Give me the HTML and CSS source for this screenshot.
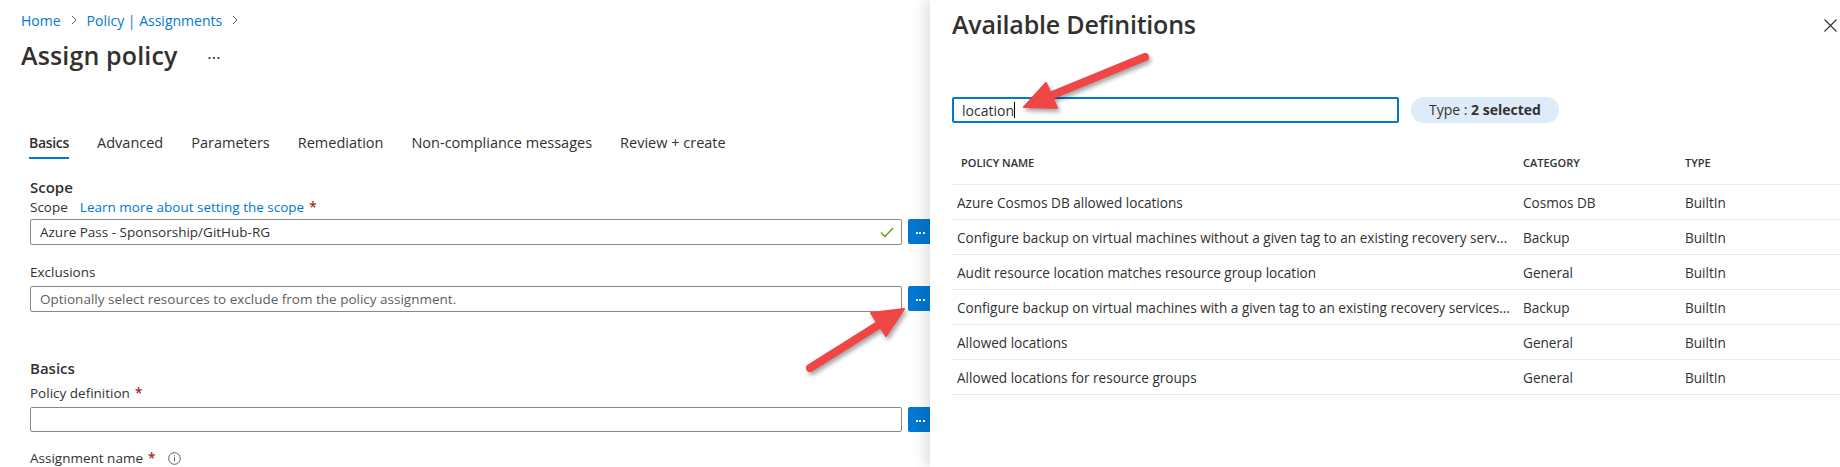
FILE: index.html
```html
<!DOCTYPE html>
<html lang="en">
<head>
<meta charset="utf-8">
<title>Assign policy</title>
<link rel="stylesheet" href="styles.css">
</head>
<body>
<div class="page">
  <main class="blade">
    <nav class="crumbs">
      <a class="crumb">Home</a>
      <svg class="chev" width="6" height="10" viewBox="0 0 6 10"><path d="M1 1l4 4-4 4" fill="none" stroke="#605e5c" stroke-width="1"/></svg>
      <a class="crumb">Policy | Assignments</a>
      <svg class="chev" width="6" height="10" viewBox="0 0 6 10"><path d="M1 1l4 4-4 4" fill="none" stroke="#605e5c" stroke-width="1"/></svg>
    </nav>
    <div class="title-row">
      <h1 class="title">Assign policy</h1>
      <svg class="more" width="12" height="4" viewBox="0 0 12 4"><circle cx="1.5" cy="2" r="1.1" fill="#323130"/><circle cx="6" cy="2" r="1.1" fill="#323130"/><circle cx="10.5" cy="2" r="1.1" fill="#323130"/></svg>
    </div>
    <div class="tabs">
      <span class="tab active">Basics</span>
      <span class="tab">Advanced</span>
      <span class="tab">Parameters</span>
      <span class="tab">Remediation</span>
      <span class="tab">Non-compliance messages</span>
      <span class="tab">Review + create</span>
    </div>
    <form class="form">
      <div class="section-title first">Scope</div>
      <div class="label label-scope">Scope <a class="link">Learn more about setting the scope</a> <span class="req">*</span></div>
      <div class="field-row">
        <div class="input">
          <span class="value">Azure Pass - Sponsorship/GitHub-RG</span>
          <svg class="check" width="14" height="11" viewBox="0 0 14 11"><path d="M1 5.5l4 4 8-8.5" fill="none" stroke="#57a300" stroke-width="1.3"/></svg>
        </div>
        <span class="btn"><i></i><i></i><i></i></span>
      </div>
      <div class="label label-excl">Exclusions</div>
      <div class="field-row">
        <div class="input"><span class="placeholder">Optionally select resources to exclude from the policy assignment.</span></div>
        <span class="btn"><i></i><i></i><i></i></span>
      </div>
      <div class="section-title second">Basics</div>
      <div class="label label-def">Policy definition <span class="req">*</span></div>
      <div class="field-row">
        <div class="input short"></div>
        <span class="btn short"><i></i><i></i><i></i></span>
      </div>
      <div class="label label-name">Assignment name <span class="req">*</span>
        <svg class="info" width="13" height="13" viewBox="0 0 13 13"><circle cx="6.5" cy="6.5" r="5.8" fill="none" stroke="#605e5c" stroke-width="1"/><path d="M6.5 5.5v4" stroke="#605e5c" stroke-width="1"/><circle cx="6.5" cy="3.8" r="0.6" fill="#605e5c"/></svg>
      </div>
    </form>
  </main>

  <aside class="panel">
    <div class="panel-head">
      <h2 class="panel-title">Available Definitions</h2>
      <svg class="close" width="13" height="13" viewBox="0 0 13 13"><path d="M0.5 0.5l12 12M12.5 0.5l-12 12" stroke="#323130" stroke-width="1.1"/></svg>
    </div>
    <div class="filters">
      <div class="search"><span class="search-text">location</span><span class="caret"></span></div>
      <div class="pill">Type : <b>2 selected</b></div>
    </div>
    <table class="defs">
      <colgroup><col class="c-name"><col class="c-cat"><col class="c-type"></colgroup>
      <thead>
        <tr><th class="n">POLICY NAME</th><th>CATEGORY</th><th>TYPE</th></tr>
      </thead>
      <tbody>
        <tr><td class="n">Azure Cosmos DB allowed locations</td><td>Cosmos DB</td><td>BuiltIn</td></tr>
        <tr><td class="n">Configure backup on virtual machines without a given tag to an existing recovery serv...</td><td>Backup</td><td>BuiltIn</td></tr>
        <tr><td class="n">Audit resource location matches resource group location</td><td>General</td><td>BuiltIn</td></tr>
        <tr><td class="n">Configure backup on virtual machines with a given tag to an existing recovery services...</td><td>Backup</td><td>BuiltIn</td></tr>
        <tr><td class="n">Allowed locations</td><td>General</td><td>BuiltIn</td></tr>
        <tr><td class="n">Allowed locations for resource groups</td><td>General</td><td>BuiltIn</td></tr>
      </tbody>
    </table>
  </aside>
</div>

<svg class="annotations" width="1840" height="467" viewBox="0 0 1840 467">
  <g class="arrow">
    <line x1="810" y1="368" x2="880" y2="324" stroke="#f04646" stroke-width="8" stroke-linecap="round"/>
    <polygon points="904,309 886,336 871,313" fill="#f04646" stroke="#f04646" stroke-width="2" stroke-linejoin="round"/>
  </g>
  <g class="arrow">
    <line x1="1145" y1="57" x2="1050" y2="96" stroke="#f04646" stroke-width="8" stroke-linecap="round"/>
    <polygon points="1024,107 1057,108 1046,83" fill="#f04646" stroke="#f04646" stroke-width="2" stroke-linejoin="round"/>
  </g>
</svg>
</body>
</html>
```

FILE: styles.css
```css
html, body {
  margin: 0;
  padding: 0;
  background: #ffffff;
}
body {
  width: 1840px;
  height: 467px;
  overflow: hidden;
  position: relative;
  font-family: "Open Sans", "Noto Sans", sans-serif;
  color: #323130;
}
.page {
  display: flex;
  height: 467px;
}

/* ---------- left blade ---------- */
.blade {
  width: 930px;
  flex: none;
  box-sizing: border-box;
  padding: 10px 0 0 21px;
  overflow: hidden;
}
.crumbs {
  display: flex;
  align-items: center;
  gap: 10px;
  height: 20px;
  font-size: 14px;
}
.crumb {
  color: #0078d4;
}
.chev {
  display: block;
}
.title-row {
  display: flex;
  align-items: center;
  margin-top: 9px;
  height: 32px;
}
.title {
  margin: 0;
  font-size: 25px;
  line-height: 32px;
  font-weight: 600;
  letter-spacing: 0.15px;
}
.more {
  margin-left: 30px;
  margin-top: 6px;
}
.tabs {
  display: flex;
  gap: 28px;
  margin: 62px 0 0 8px;
}
.tab {
  font-size: 14.5px;
  line-height: 20px;
  padding-bottom: 4px;
  border-bottom: 2px solid transparent;
}
.tab.active {
  font-size: 14px;
  letter-spacing: -0.3px;
  font-weight: 600;
  border-bottom-color: #0078d4;
}
.form {
  margin: 0 0 0 9px;
}
.section-title {
  font-size: 15px;
  line-height: 20px;
  font-weight: 600;
}
.section-title.first { margin-top: 18px; }
.section-title.second { margin-top: 46px; }
.label {
  font-size: 13.5px;
  line-height: 20px;
  display: flex;
  align-items: center;
  gap: 5px;
}
.label-scope { margin-bottom: 2px; }
.label-excl { margin-top: 17px; margin-bottom: 4px; }
.label-def { margin-top: 5px; margin-bottom: 4px; }
.label-name { margin-top: 16px; }
.link {
  color: #0078d4;
  margin-left: 7px;
}
.req {
  color: #a4262c;
  font-weight: 600;
}
.info {
  margin-left: 8px;
}
.field-row {
  display: flex;
  gap: 6px;
  align-items: flex-start;
}
.input {
  width: 872px;
  height: 26px;
  flex: none;
  box-sizing: border-box;
  border: 1px solid #8a8886;
  border-radius: 2px;
  padding: 0 7px 0 9px;
  display: flex;
  align-items: center;
  justify-content: space-between;
  font-size: 13.5px;
}
.input.short { height: 25px; }
.placeholder {
  color: #605e5c;
}
.btn {
  width: 24px;
  height: 25px;
  flex: none;
  background: #0078d4;
  border-radius: 2px;
  display: flex;
  align-items: center;
  justify-content: center;
  gap: 1.5px;
  padding-top: 2px;
  box-sizing: border-box;
}
.btn i {
  width: 2px;
  height: 2px;
  background: #ffffff;
  display: block;
}

/* ---------- right panel ---------- */
.panel {
  width: 910px;
  flex: none;
  box-sizing: border-box;
  padding: 8px 0 0 22px;
  background: #ffffff;
  box-shadow: -5px 0 12px rgba(0, 0, 0, 0.13);
  position: relative;
  z-index: 1;
}
.panel-head {
  display: flex;
  justify-content: space-between;
  align-items: flex-start;
}
.panel-title {
  margin: 0;
  font-size: 25px;
  line-height: 32px;
  font-weight: 600;
  letter-spacing: -0.2px;
}
.close {
  margin: 11px 3px 0 0;
}
.filters {
  display: flex;
  align-items: center;
  gap: 12px;
  margin-top: 57px;
}
.search {
  width: 447px;
  height: 26px;
  box-sizing: border-box;
  border: 2px solid #0078d4;
  border-radius: 2px;
  padding: 0 8px;
  display: flex;
  align-items: center;
  font-size: 14px;
}
.caret {
  width: 1px;
  height: 16px;
  background: #000000;
}
.pill {
  width: 148px;
  height: 26px;
  box-sizing: border-box;
  padding-left: 18px;
  border-radius: 13px;
  background: #deecf9;
  font-size: 14px;
  line-height: 26px;
}
.pill b {
  font-weight: 700;
}
.defs {
  margin-top: 17px;
  width: 888px;
  border-collapse: collapse;
  table-layout: fixed;
}
.c-name { width: 563px; }
.c-cat { width: 162px; }
.defs th {
  height: 44px;
  padding: 0 0 0 8px;
  text-align: left;
  font-size: 11px;
  font-weight: 600;
  border-bottom: 1px solid #edebe9;
}
.defs th.n { padding-left: 9px; }
.defs td {
  height: 34px;
  padding: 0 0 0 8px;
  font-size: 13.6px;
  border-bottom: 1px solid #edebe9;
  white-space: nowrap;
  overflow: hidden;
  text-overflow: ellipsis;
}
.defs td.n { padding-left: 5px; }

/* ---------- annotations ---------- */
.annotations {
  position: absolute;
  left: 0;
  top: 0;
  pointer-events: none;
  z-index: 5;
}
.arrow {
  filter: drop-shadow(2px 3px 2px rgba(0, 0, 0, 0.35));
}
```
